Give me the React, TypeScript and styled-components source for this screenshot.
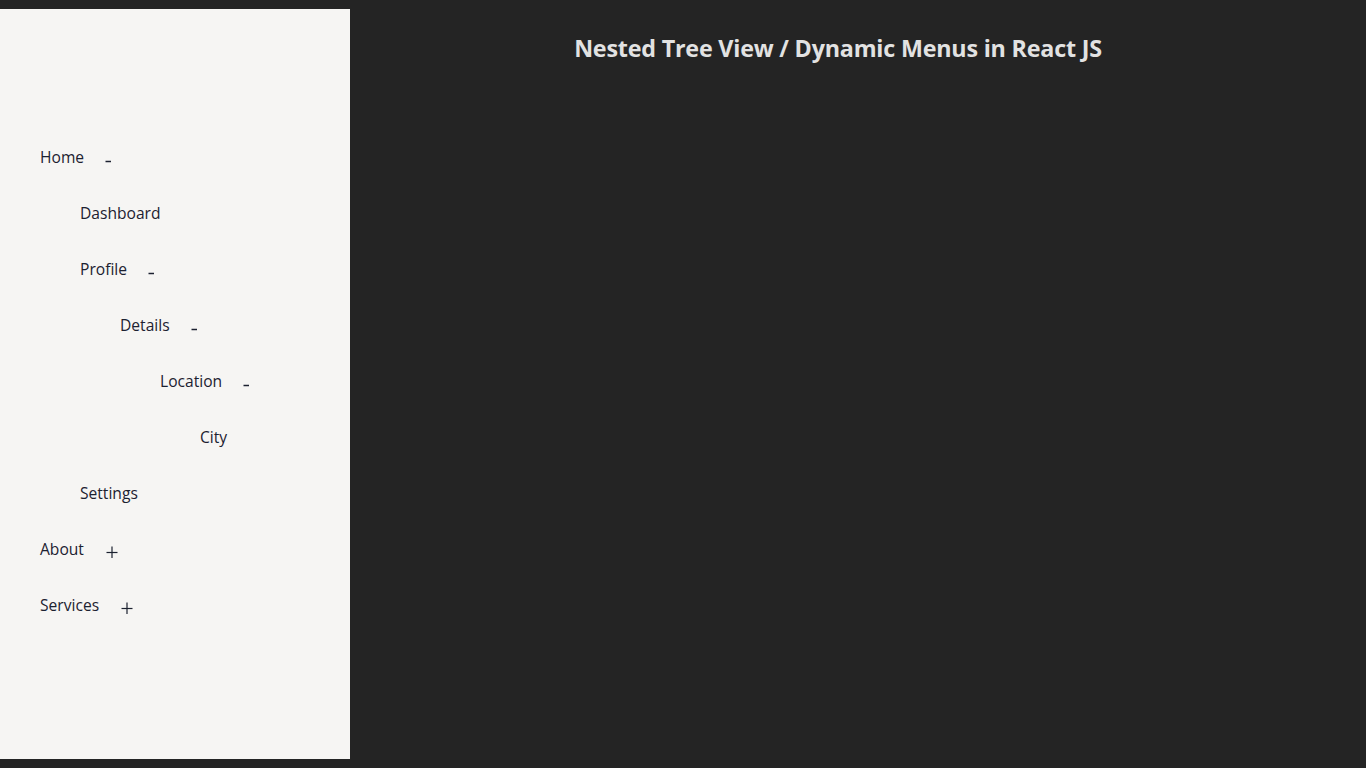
import { Fragment } from 'react';
import styled, { createGlobalStyle } from 'styled-components';

interface MenuNode {
    label: string;
    children?: MenuNode[];
    open?: boolean;
}

const menu: MenuNode[] = [
    {
        label: 'Home',
        open: true,
        children: [
            { label: 'Dashboard' },
            {
                label: 'Profile',
                open: true,
                children: [
                    {
                        label: 'Details',
                        open: true,
                        children: [
                            {
                                label: 'Location',
                                open: true,
                                children: [{ label: 'City' }],
                            },
                        ],
                    },
                ],
            },
            { label: 'Settings' },
        ],
    },
    { label: 'About', children: [{ label: 'Team' }] },
    { label: 'Services', children: [{ label: 'Consulting' }] },
];

const GlobalStyle = createGlobalStyle`
    html, body {
        margin: 0;
        padding: 0;
        background: #242424;
    }
    body {
        font-family: 'Open Sans', 'Noto Sans', sans-serif;
    }
`;

const Page = styled.div`
    display: flex;
    height: 768px;
    box-sizing: border-box;
    padding: 9px 0;
`;

const Sidebar = styled.aside`
    width: 350px;
    flex-shrink: 0;
    background: #f6f5f3;
    box-sizing: border-box;
    padding-top: 120px;
`;

const Main = styled.main`
    flex: 1;
    padding-right: 40px;
    display: flex;
    justify-content: center;
`;

const Title = styled.h1`
    margin: 0;
    padding-top: 24px;
    font-size: 23.3px;
    font-weight: 700;
    line-height: 30px;
    color: #e2e2e2;
    letter-spacing: -0.2px;
`;

const Row = styled.div<{ depth: number }>`
    display: flex;
    align-items: center;
    gap: 21px;
    height: 56px;
    padding-left: ${({ depth }) => 40 + depth * 40}px;
    font-size: 15.6px;
    font-weight: 500;
    color: #1c2130;
`;

const Toggle = styled.span`
    display: flex;
    align-items: center;
    justify-content: center;
    width: 13px;
    height: 12px;
    margin-top: 6px;
    color: #1c2130;
`;

const MinusIcon = () => (
    <svg width='13' height='12' viewBox='0 0 13 12'>
        <line x1='0.5' y1='7.5' x2='6' y2='7.5' stroke='currentColor' strokeWidth='1.5' />
    </svg>
);

const PlusIcon = () => (
    <svg width='13' height='12' viewBox='0 0 13 12'>
        <line x1='1.5' y1='6.5' x2='12.5' y2='6.5' stroke='currentColor' strokeWidth='1.2' />
        <line x1='7' y1='0.5' x2='7' y2='12.5' stroke='currentColor' strokeWidth='1.2' />
    </svg>
);

const TreeItem = ({ node, depth }: { node: MenuNode; depth: number }) => {
    const hasChildren = !!node.children?.length;
    return (
        <Fragment>
            <Row depth={depth}>
                <span>{node.label}</span>
                {hasChildren && (
                    <Toggle>{node.open ? <MinusIcon /> : <PlusIcon />}</Toggle>
                )}
            </Row>
            {hasChildren &&
                node.open &&
                node.children!.map((child) => (
                    <TreeItem key={child.label} node={child} depth={depth + 1} />
                ))}
        </Fragment>
    );
};

export default function App() {
    return (
        <Fragment>
            <GlobalStyle />
            <Page>
                <Sidebar>
                    {menu.map((node) => (
                        <TreeItem key={node.label} node={node} depth={0} />
                    ))}
                </Sidebar>
                <Main>
                    <Title>Nested Tree View / Dynamic Menus in React JS</Title>
                </Main>
            </Page>
        </Fragment>
    );
}
